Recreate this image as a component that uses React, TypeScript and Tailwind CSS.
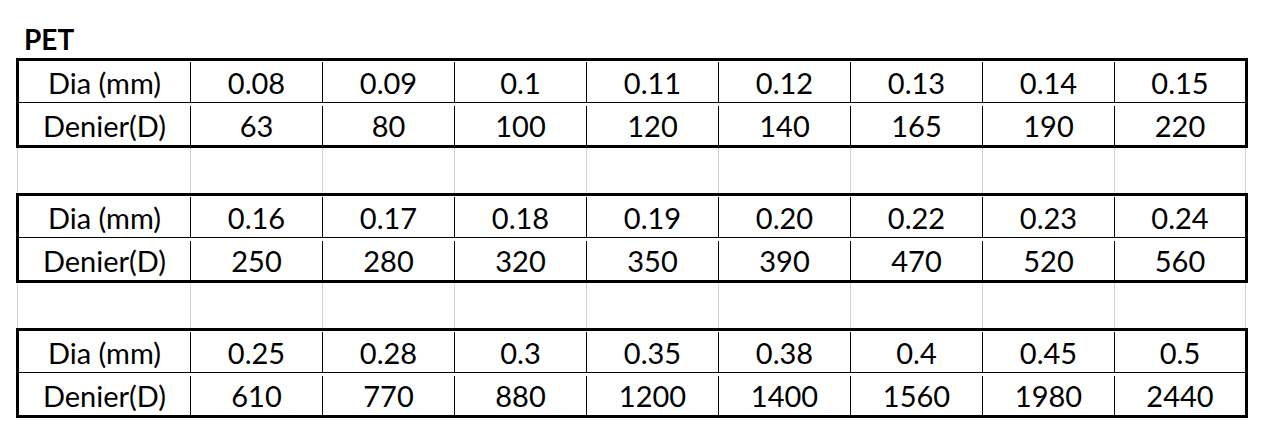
import React from 'react';

const blocks = [
  {
    dia: ['0.08', '0.09', '0.1', '0.11', '0.12', '0.13', '0.14', '0.15'],
    den: ['63', '80', '100', '120', '140', '165', '190', '220'],
  },
  {
    dia: ['0.16', '0.17', '0.18', '0.19', '0.20', '0.22', '0.23', '0.24'],
    den: ['250', '280', '320', '350', '390', '470', '520', '560'],
  },
  {
    dia: ['0.25', '0.28', '0.3', '0.35', '0.38', '0.4', '0.45', '0.5'],
    den: ['610', '770', '880', '1200', '1400', '1560', '1980', '2440'],
  },
];

function Row({ label, values, h }: { label: string; values: string[]; h: string }) {
  return (
    <div className={`flex ${h}`}>
      <div className="w-[171px] flex items-center justify-center">{label}</div>
      {values.map((v, i) => (
        <div
          key={i}
          className={`${i === 7 ? 'flex-1' : 'w-[132px]'} border-l border-black flex items-center justify-center`}
        >
          {v}
        </div>
      ))}
    </div>
  );
}

function GapRow() {
  return (
    <div className="flex h-[45px] ml-[17px]">
      <div className="w-[173px] border-l border-[#d4d4d4]" />
      {Array.from({ length: 8 }).map((_, i) => (
        <div key={i} className={`w-[132px] border-l border-[#d4d4d4] ${i === 7 ? 'border-r' : ''}`} />
      ))}
    </div>
  );
}

function Block({ dia, den }: { dia: string[]; den: string[] }) {
  return (
    <div className="ml-[16px] w-[1232px] h-[90px] border-[3px] border-black flex flex-col leading-none">
      <Row label="Dia (mm)" values={dia} h="h-[42px] border-b border-black pt-[1px]" />
      <Row label="Denier(D)" values={den} h="flex-1 pt-[3px]" />
    </div>
  );
}

export default function App() {
  return (
    <div
      className="w-[1270px] h-[442px] bg-white text-black text-[29px] overflow-hidden"
      style={{ fontFamily: 'Lato, "Open Sans", sans-serif' }}
    >
      <div className="h-[58px] flex items-end pb-[5px] pl-[24px] font-bold text-[28px] leading-none">PET</div>
      <Block {...blocks[0]} />
      <GapRow />
      <Block {...blocks[1]} />
      <GapRow />
      <Block {...blocks[2]} />
    </div>
  );
}
